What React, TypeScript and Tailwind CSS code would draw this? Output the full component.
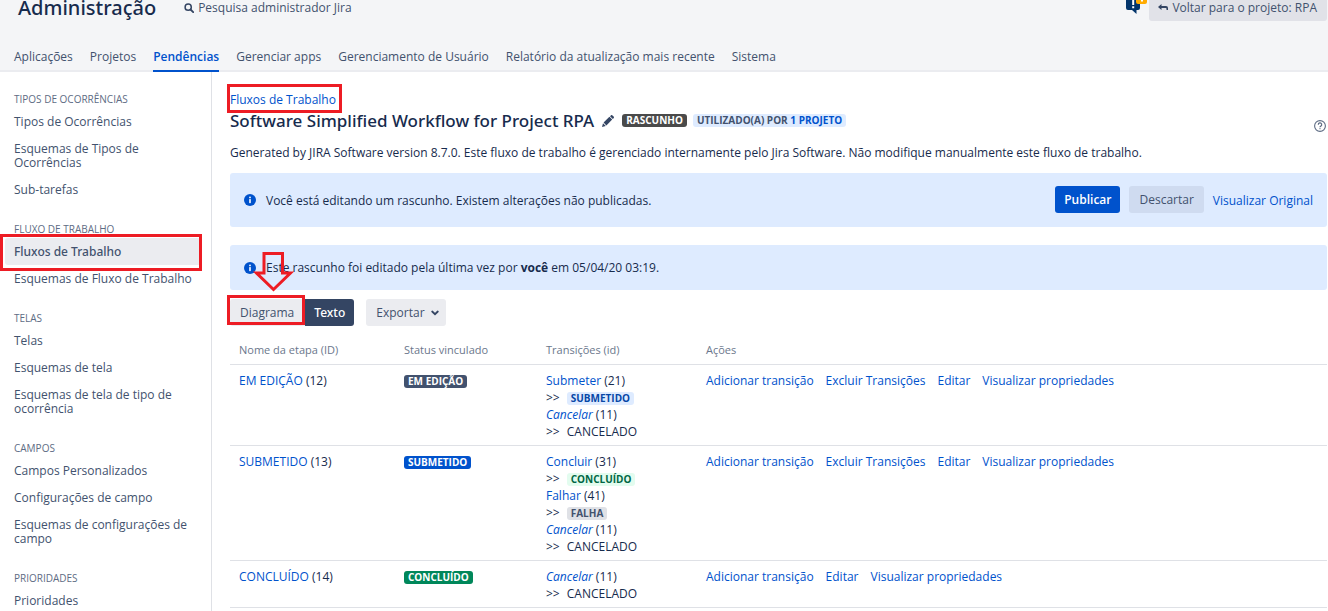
import React from "react";

type Tone = "slate" | "blue" | "green" | "dark" | "softBlue" | "softGreen" | "softGray" | "usage";

const tones: Record<Tone, string> = {
  slate: "bg-[#42526e] text-white",
  blue: "bg-[#0052cc] text-white",
  green: "bg-[#00875a] text-white",
  dark: "bg-[#4a4a4a] text-white",
  softBlue: "bg-[#deebff] text-[#0747a6]",
  softGreen: "bg-[#e3fcef] text-[#006644]",
  softGray: "bg-[#dfe1e6] text-[#42526e]",
  usage: "bg-[#deebff] text-[#42526e]",
};

function Lozenge({ tone, children }: { tone: Tone; children: React.ReactNode }) {
  return (
    <span className={`inline-block rounded-[3px] px-1 align-middle text-[10px] leading-[13px] font-bold whitespace-nowrap ${tones[tone]}`}>
      {children}
    </span>
  );
}

function Link({ children, className = "" }: { children: React.ReactNode; className?: string }) {
  return (
    <a href="#" className={`text-[#0052cc] hover:underline ${className}`}>
      {children}
    </a>
  );
}

function InfoIcon() {
  return (
    <svg viewBox="0 0 12 12" className="size-3 shrink-0" aria-hidden="true">
      <circle cx="6" cy="6" r="6" fill="#0052cc" />
      <circle cx="6" cy="3.4" r="0.9" fill="#fff" />
      <rect x="5.2" y="5" width="1.6" height="4.2" rx="0.6" fill="#fff" />
    </svg>
  );
}

const tabs = [
  "Aplicações",
  "Projetos",
  "Pendências",
  "Gerenciar apps",
  "Gerenciamento de Usuário",
  "Relatório da atualização mais recente",
  "Sistema",
];

const sections = [
  { title: "TIPOS DE OCORRÊNCIAS", items: ["Tipos de Ocorrências", "Esquemas de Tipos de Ocorrências", "Sub-tarefas"] },
  { title: "FLUXO DE TRABALHO", items: ["Fluxos de Trabalho", "Esquemas de Fluxo de Trabalho"] },
  { title: "TELAS", items: ["Telas", "Esquemas de tela", "Esquemas de tela de tipo de ocorrência"] },
  { title: "CAMPOS", items: ["Campos Personalizados", "Configurações de campo", "Esquemas de configurações de campo"] },
  { title: "PRIORIDADES", items: ["Prioridades"] },
];

type Transition = { name: string; id: number; italic?: boolean; target: string; tone?: Tone };
type Step = { name: string; id: number; tone: Tone; transitions: Transition[]; actions: string[] };

const cancel: Transition = { name: "Cancelar", id: 11, italic: true, target: "CANCELADO" };
const allActions = ["Adicionar transição", "Excluir Transições", "Editar", "Visualizar propriedades"];

const steps: Step[] = [
  {
    name: "EM EDIÇÃO",
    id: 12,
    tone: "slate",
    transitions: [{ name: "Submeter", id: 21, target: "SUBMETIDO", tone: "softBlue" }, cancel],
    actions: allActions,
  },
  {
    name: "SUBMETIDO",
    id: 13,
    tone: "blue",
    transitions: [
      { name: "Concluir", id: 31, target: "CONCLUÍDO", tone: "softGreen" },
      { name: "Falhar", id: 41, target: "FALHA", tone: "softGray" },
      cancel,
    ],
    actions: allActions,
  },
  {
    name: "CONCLUÍDO",
    id: 14,
    tone: "green",
    transitions: [cancel],
    actions: ["Adicionar transição", "Editar", "Visualizar propriedades"],
  },
];

function Header() {
  return (
    <header className="border-b-2 border-[#ebecf0] bg-[#f4f5f7]">
      <div className="flex h-[43px] items-start">
        <h1 className="ml-[18px] font-['Noto_Sans',sans-serif] text-xl leading-4 font-medium text-[#172b4d]">Administração</h1>
        <a href="#" className="ml-7 flex items-center gap-1 text-xs leading-4 text-[#42526e]">
          <svg viewBox="0 0 10 10" className="size-2.5" fill="none" stroke="#344563" aria-hidden="true">
            <circle cx="4.2" cy="4.2" r="3.1" strokeWidth="1.5" />
            <path d="M6.5 6.5 9.2 9.2" strokeWidth="1.8" strokeLinecap="round" />
          </svg>
          Pesquisa administrador Jira
        </a>
        <div className="ml-auto flex items-start pr-px">
          <button type="button" aria-label="Comentários" className="mr-px">
            <svg viewBox="0 0 22 14" className="h-3.5 w-[22px]" aria-hidden="true">
              <path d="M0 0h14v8a2 2 0 0 1-2 2h-1.500v4L6 10H2a2 2 0 0 1-2-2z" fill="#03356b" />
              <path d="M6.200 0h2v5h-2zM6.200 6.300h2v1.900h-2z" fill="#fff" />
              <path d="M10 0h11v2a2 2 0 0 1-2 2h-7a2 2 0 0 1-2-2z" fill="#ffab00" />
              <path d="M15 0h2v1.500h-2z" fill="#fff" />
            </svg>
          </button>
          <a href="#" className="-mt-[5px] flex h-[26px] items-center gap-1 rounded-[3px] bg-[#e1e2e8] pr-2.5 pl-[9px] text-xs text-[#42526e]">
            <svg viewBox="0 0 10 8" className="h-2 w-2.5" aria-hidden="true">
              <path d="M0 3 3.500 0v2H8a2 2 0 0 1 2 2v2H8.500V4.800a.8.8 0 0 0-.8-.8H3.500v2z" fill="#344563" />
            </svg>
            Voltar para o projeto: RPA
          </a>
        </div>
      </div>
      <nav className="-mb-0.5 flex gap-[17px] pl-3.5">
        {tabs.map((tab) => (
          <a
            key={tab}
            href="#"
            className={`border-b-2 pt-1.5 pb-[5px] text-xs leading-4 whitespace-nowrap ${
              tab === "Pendências" ? "border-[#0052cc] font-semibold text-[#0052cc]" : "border-transparent text-[#42526e]"
            }`}
          >
            {tab}
          </a>
        ))}
      </nav>
    </header>
  );
}

function Sidebar() {
  return (
    <aside className="w-[212px] shrink-0 border-r border-[#dfe1e6] pt-[18px]">
      {sections.map((section) => (
        <section key={section.title} className="mb-[17px]">
          <h2 className="pl-3.5 text-[10px] leading-[18px] font-medium text-[#5e6c84]">{section.title}</h2>
          <ul>
            {section.items.map((item) => {
              const active = item === "Fluxos de Trabalho";
              return (
                <li key={item} className="relative">
                  <a
                    href="#"
                    className={`mr-2.5 ml-[5px] block rounded-[3px] pt-[7px] pr-1 pb-1.5 pl-[9px] text-xs leading-[14px] text-[#42526e] ${
                      active ? "bg-[#ebecf0] font-['Noto_Sans',sans-serif] font-medium" : ""
                    }`}
                  >
                    {item}
                  </a>
                  {active && <span className="pointer-events-none absolute -top-1 right-[9px] -bottom-1.5 left-0 border-3 border-[#ed1c24]" />}
                </li>
              );
            })}
          </ul>
        </section>
      ))}
    </aside>
  );
}

function StepTable() {
  return (
    <table className="mt-2 w-full table-fixed border-collapse text-xs leading-[17px]">
      <colgroup>
        <col className="w-[165px]" />
        <col className="w-[142px]" />
        <col className="w-[160px]" />
        <col />
      </colgroup>
      <thead>
        <tr className="border-b border-[#dfe1e6] text-left text-[11px] text-[#6b778c]">
          {["Nome da etapa (ID)", "Status vinculado", "Transições (id)", "Ações"].map((label) => (
            <th key={label} className="pt-[7px] pb-1.5 pl-[9px] font-medium">
              {label}
            </th>
          ))}
        </tr>
      </thead>
      <tbody>
        {steps.map((step) => (
          <tr key={step.id} className="border-b border-[#dfe1e6] align-top">
            <td className="pt-[7px] pb-[5px] pl-[9px]">
              <Link>{step.name}</Link> ({step.id})
            </td>
            <td className="pt-[7px] pb-[5px] pl-[9px]">
              <Lozenge tone={step.tone}>{step.name}</Lozenge>
            </td>
            <td className="pt-[7px] pb-[5px] pl-[9px]">
              {step.transitions.map((t) => (
                <div key={t.name}>
                  <div className="h-[17px]">
                    <Link className={t.italic ? "italic" : ""}>{t.name}</Link> ({t.id})
                  </div>
                  <div className="flex h-[17px] items-center gap-[7px]">
                    <span>&gt;&gt;</span>
                    {t.tone ? (
                      <span className="flex pt-0.5">
                        <Lozenge tone={t.tone}>{t.target}</Lozenge>
                      </span>
                    ) : (
                      <span>{t.target}</span>
                    )}
                  </div>
                </div>
              ))}
            </td>
            <td className="pt-[7px] pb-[5px] pl-[9px]">
              <div className="flex gap-3 whitespace-nowrap">
                {step.actions.map((action) => (
                  <Link key={action}>{action}</Link>
                ))}
              </div>
            </td>
          </tr>
        ))}
      </tbody>
    </table>
  );
}

export default function App() {
  return (
    <div className="h-screen overflow-hidden bg-white font-['Open_Sans','Noto_Sans',sans-serif] text-[#172b4d]">
      <Header />
      <div className="flex">
        <Sidebar />
        <main className="min-w-0 flex-1 pt-5 pr-px pl-[18px] text-xs">
          <div className="flex items-start justify-between">
            <div>
              <span className="relative block w-fit leading-4">
                <Link>Fluxos de Trabalho</Link>
                <span className="pointer-events-none absolute -top-2 -right-1.5 -bottom-[5px] -left-[3px] border-3 border-[#ed1c24]" />
              </span>
              <div className="flex h-[25px] items-center">
                <h2 className="font-['Noto_Sans',sans-serif] text-[17px] leading-6 font-medium">Software Simplified Workflow for Project RPA</h2>
                <button type="button" aria-label="Editar nome" className="mr-2 ml-2">
                  <svg viewBox="0 0 12 12" className="size-3" fill="#344563" aria-hidden="true">
                    <path d="M0 12 1 8.200 3.800 11zM1.600 7.600 7.400 1.800l2.800 2.800-5.800 5.800zM8 1.200 8.800.4a1.200 1.200 0 0 1 1.700 0l1.100 1.100a1.200 1.200 0 0 1 0 1.700l-.8.800z" />
                  </svg>
                </button>
                <div className="flex gap-1.5">
                  <Lozenge tone="dark">RASCUNHO</Lozenge>
                  <Lozenge tone="usage">
                    UTILIZADO(A) POR <Link>1 PROJETO</Link>
                  </Lozenge>
                </div>
              </div>
            </div>
            <button type="button" aria-label="Ajuda" className="mt-7 mr-px">
              <svg viewBox="0 0 12 12" className="size-3" fill="none" stroke="#5e6c84" aria-hidden="true">
                <circle cx="6" cy="6" r="5.400" strokeWidth="1.100" />
                <path d="M4.300 4.700a1.700 1.700 0 1 1 2.500 1.400c-.6.300-.8.500-.8 1.100" strokeWidth="1.200" />
                <circle cx="6" cy="8.800" r=".3" strokeWidth=".8" />
              </svg>
            </button>
          </div>
          <p className="mt-3 leading-4">
            Generated by JIRA Software version 8.7.0. Este fluxo de trabalho é gerenciado internamente pelo Jira Software. Não modifique
            manualmente este fluxo de trabalho.
          </p>
          <div className="mt-3 flex h-[54px] items-center gap-2.5 rounded-[3px] bg-[#deebff] pr-3.5 pb-px pl-3.5">
            <InfoIcon />
            <p className="pt-0.5">Você está editando um rascunho. Existem alterações não publicadas.</p>
            <div className="ml-auto flex items-center gap-[9px]">
              <button type="button" className="h-[27px] rounded-[3px] bg-[#0052cc] px-[9px] pt-px font-semibold text-white">
                Publicar
              </button>
              <button type="button" className="h-[27px] rounded-[3px] bg-[#cfdbf0] px-2.5 pt-px text-[#42526e]">
                Descartar
              </button>
              <Link className="pt-0.5">Visualizar Original</Link>
            </div>
          </div>
          <div className="mt-[18px] flex h-[45px] items-center gap-2.5 rounded-[3px] bg-[#deebff] pl-3.5">
            <InfoIcon />
            <p>
              Este rascunho foi editado pela última vez por <strong>você</strong> em 05/04/20 03:19.
            </p>
          </div>
          <div className="mt-[9px] flex gap-3">
            <div className="flex">
              <div className="relative">
                <button type="button" className="h-[27px] rounded-l-[3px] bg-[#ebecf0] pt-px pr-[11px] pl-2.5 text-[#42526e]">
                  Diagrama
                </button>
                <span className="pointer-events-none absolute -top-1 right-0 bottom-px -left-[3px] border-3 border-[#ed1c24]" />
                <svg
                  viewBox="0 0 42 41"
                  className="pointer-events-none absolute bottom-[33px] left-[23px] h-[41px] w-[42px]"
                  fill="none"
                  stroke="#ed1c24"
                  strokeWidth="3"
                  aria-hidden="true"
                >
                  <path d="M11 1.500h18.500V21h8L20.500 37.500 3.500 21H11z" />
                </svg>
              </div>
              <button
                type="button"
                className="h-[27px] rounded-r-[3px] bg-[#344563] px-[9px] pt-px font-['Noto_Sans',sans-serif] font-medium text-white"
              >
                Texto
              </button>
            </div>
            <button type="button" className="flex h-[27px] items-center gap-1.5 rounded-[3px] bg-[#ebecf0] pt-px pr-[7px] pl-2.5 text-[#42526e]">
              Exportar
              <svg viewBox="0 0 8 6" className="h-1.5 w-2" fill="none" stroke="#344563" strokeWidth="1.800" strokeLinecap="round" aria-hidden="true">
                <path d="m1.200 1.500 2.800 2.700 2.800-2.700" />
              </svg>
            </button>
          </div>
          <StepTable />
        </main>
      </div>
    </div>
  );
}
